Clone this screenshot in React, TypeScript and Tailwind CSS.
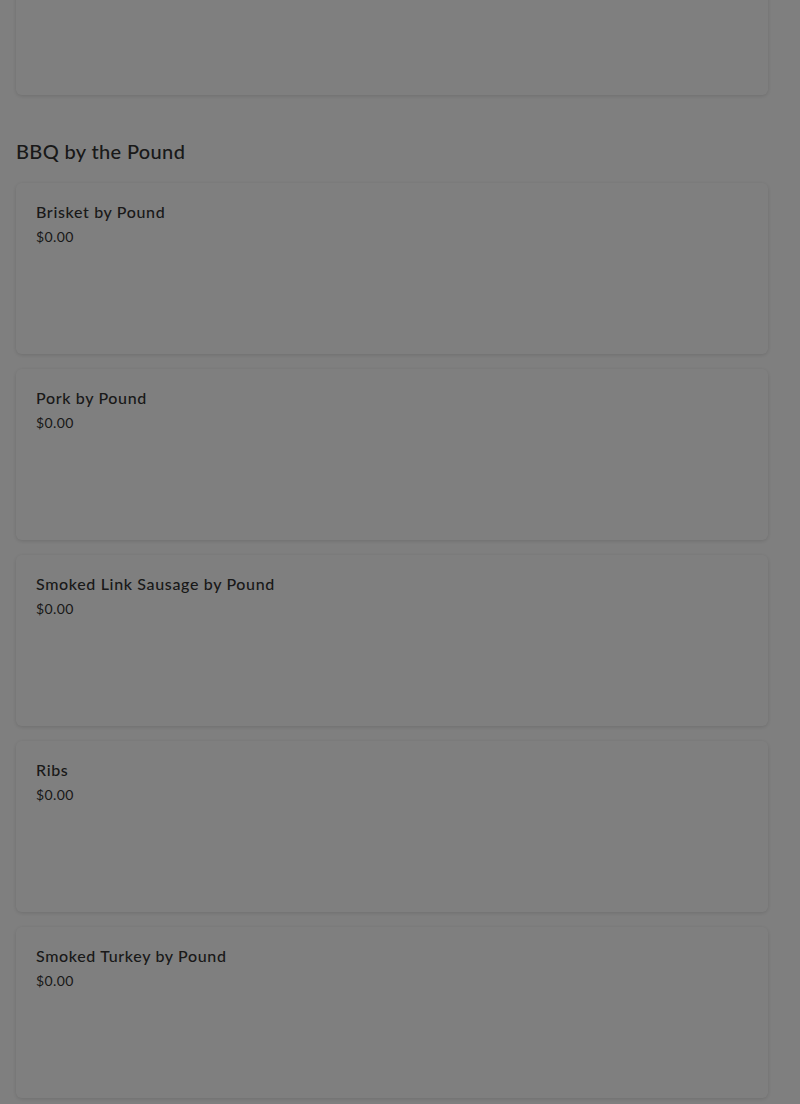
const items = [
  "Brisket by Pound",
  "Pork by Pound",
  "Smoked Link Sausage by Pound",
  "Ribs",
  "Smoked Turkey by Pound",
];

function ItemCard({ name }: { name: string }) {
  return (
    <div className="h-[171px] rounded-md bg-white px-5 pt-[17px] shadow-[0_1px_4px_rgba(0,0,0,0.14)]">
      <div className="text-[16px] font-medium leading-6 tracking-[0.65px] text-[#333]">{name}</div>
      <div className="mt-[3px] text-[14px] leading-5 tracking-[0.4px] text-[#333]">$0.00</div>
    </div>
  );
}

export default function App() {
  return (
    <div
      className="relative h-[1104px] w-[800px] overflow-hidden bg-white"
      style={{ fontFamily: "Lato, 'Noto Sans', sans-serif" }}
    >
      <div className="flex flex-col pl-4 pr-8">
        <div className="-mt-[80px] h-[175px] rounded-md bg-white shadow-[0_1px_4px_rgba(0,0,0,0.14)]" />
        <h2 className="mt-[42px] text-[20px] font-medium leading-7 tracking-[0.35px] text-[#333]">
          BBQ by the Pound
        </h2>
        <div className="mt-[18px] flex flex-col gap-[15px]">
          {items.map((n) => (
            <ItemCard key={n} name={n} />
          ))}
        </div>
      </div>
      <div className="absolute inset-0 bg-black/50" />
    </div>
  );
}
